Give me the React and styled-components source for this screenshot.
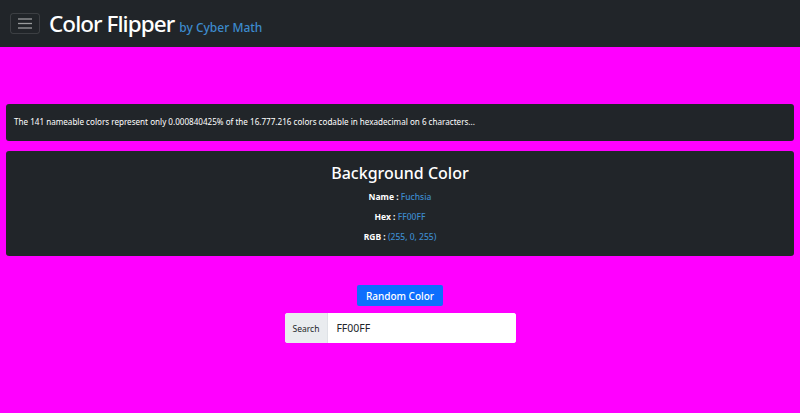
import React from 'react'
import styled, { createGlobalStyle } from 'styled-components'

const GlobalStyle = createGlobalStyle`
    html, body {
        margin: 0;
        padding: 0;
        background: #ff00ff;
        font-family: 'Noto Sans', 'Open Sans', sans-serif;
    }
    * { box-sizing: border-box; }
`

const Navbar = styled.nav`
    height: 47px;
    background: #212529;
    display: flex;
    align-items: center;
    padding: 0 10px;
    gap: 9px;
`

const Toggler = styled.button`
    width: 30px;
    height: 21px;
    border: 1px solid rgba(255, 255, 255, 0.12);
    border-radius: 3px;
    background: transparent;
    display: flex;
    align-items: center;
    justify-content: center;
    padding: 0;
`

const Brand = styled.div`
    display: flex;
    align-items: baseline;
    gap: 5px;
    color: #fff;
`

const Title = styled.span`
    font-size: 22.5px;
    font-weight: 500;
    letter-spacing: -0.95px;
`

const By = styled.span`
    font-size: 12px;
    font-weight: 500;
    color: #3d8bcd;
`

const Main = styled.main`
    padding: 57px 6px 0;
    display: flex;
    flex-direction: column;
    gap: 10px;
`

const Card = styled.section`
    background: #212529;
    border-radius: 3px;
    color: #fff;
    padding: ${({ $pad }) => $pad};
    text-align: ${({ $center }) => ($center ? 'center' : 'left')};
`

const Fact = styled.p`
    margin: 0;
    font-size: 8.1px;
    line-height: 12px;
`

const Heading = styled.h2`
    margin: 0 0 3px;
    font-size: 16px;
    font-weight: 500;
    line-height: 22px;
`

const Line = styled.p`
    margin: 0;
    font-size: 8.5px;
    font-weight: 700;
    line-height: 20px;
`

const Value = styled.span`
    color: #3d8bcd;
    font-weight: 500;
`

const Controls = styled.div`
    margin-top: 29px;
    display: flex;
    flex-direction: column;
    align-items: center;
    gap: 7px;
`

const Button = styled.button`
    background: #0d6efd;
    color: #fff;
    border: none;
    border-radius: 2px;
    height: 21px;
    padding: 0 9px;
    font-family: inherit;
    font-size: 10px;
    font-weight: 500;
`

const InputGroup = styled.div`
    display: flex;
    width: 231px;
    height: 30px;
    border-radius: 3px;
    overflow: hidden;
    background: #fff;
`

const Addon = styled.span`
    display: flex;
    align-items: center;
    padding: 0 8px;
    background: #e9ecef;
    border-right: 1px solid #dee2e6;
    color: #212529;
    font-size: 8.5px;
`

const Input = styled.input`
    flex: 1;
    border: none;
    outline: none;
    padding: 0 8px;
    font-family: inherit;
    font-size: 10.5px;
    color: #212529;
`

export default function App() {
    return (
        <>
            <GlobalStyle />
            <Navbar>
                <Toggler aria-label="menu">
                    <svg width="14" height="11" viewBox="0 0 14 11">
                        <g stroke="rgba(255,255,255,0.55)" strokeWidth="1.3">
                            <line x1="0" y1="1" x2="14" y2="1" />
                            <line x1="0" y1="5.5" x2="14" y2="5.5" />
                            <line x1="0" y1="10" x2="14" y2="10" />
                        </g>
                    </svg>
                </Toggler>
                <Brand>
                    <Title>Color Flipper</Title>
                    <By>by Cyber Math</By>
                </Brand>
            </Navbar>
            <Main>
                <Card $pad="12px 8px 13px">
                    <Fact>
                        The 141 nameable colors represent only 0.000840425% of the 16.777.216 colors codable in hexadecimal on 6 characters...
                    </Fact>
                </Card>
                <Card $pad="11px 8px 9px" $center>
                    <Heading>Background Color</Heading>
                    <Line>Name : <Value>Fuchsia</Value></Line>
                    <Line>Hex : <Value>FF00FF</Value></Line>
                    <Line>RGB : <Value>(255, 0, 255)</Value></Line>
                </Card>
            </Main>
            <Controls>
                <Button>Random Color</Button>
                <InputGroup>
                    <Addon>Search</Addon>
                    <Input defaultValue="FF00FF" />
                </InputGroup>
            </Controls>
        </>
    )
}
